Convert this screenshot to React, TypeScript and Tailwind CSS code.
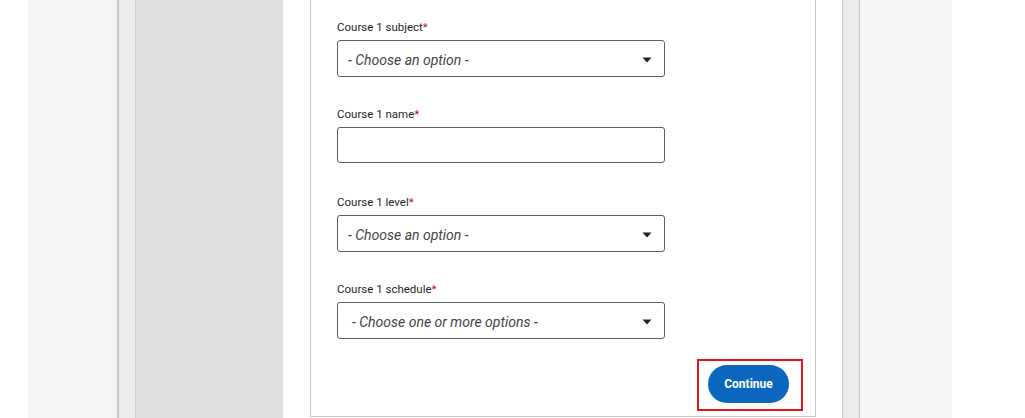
import React from "react";

const font = { fontFamily: "Roboto, 'Noto Sans', sans-serif" };

function Label({ text }: { text: string }) {
  return (
    <div className="h-[16px] text-[11.5px] leading-[16px] text-[#1f1f1f]">
      {text}
      <span className="text-[#d0021b]">*</span>
    </div>
  );
}

function Caret() {
  return (
    <svg width="10" height="6" viewBox="0 0 10 6" className="shrink-0">
      <path d="M0.5 0.5 L9.5 0.5 L5 5.5 Z" fill="#222" />
    </svg>
  );
}

function Select({ text, pl }: { text: string; pl: string }) {
  return (
    <div
      className={`mt-[5px] flex h-[37px] w-[328px] items-center justify-between rounded-[3px] border border-[#5f5f5f] bg-white pt-[3px] ${pl} pr-[12px]`}
    >
      <span className="text-[14px] italic text-[#444]">{text}</span>
      <Caret />
    </div>
  );
}

export default function App() {
  return (
    <div className="flex h-[418px] w-[1025px] overflow-hidden bg-white" style={font}>
      <div className="w-[28px] shrink-0 bg-white" />
      <div className="w-[89px] shrink-0 bg-[#f5f5f5]" />
      <div className="w-[2px] shrink-0 bg-[#c8c8c8]" />
      <div className="w-[16px] shrink-0 bg-[#ebebeb]" />
      <div className="w-[1px] shrink-0 bg-[#cccccc]" />
      <div className="w-[147px] shrink-0 bg-[#dfdfdf]" />
      <div className="w-[27px] shrink-0 bg-white" />
      <div className="relative h-[417px] w-[506px] shrink-0 border-x border-b border-[#c8c8c8] bg-white pl-[26px] pr-[26px]">
        <div className="pt-[19px]">
          <Label text="Course 1 subject" />
          <Select text="- Choose an option -" pl="pl-[10px]" />
        </div>
        <div className="pt-[29px]">
          <Label text="Course 1 name" />
          <div className="mt-[5px] h-[36px] w-[328px] rounded-[3px] border border-[#5f5f5f] bg-white" />
        </div>
        <div className="pt-[31px]">
          <Label text="Course 1 level" />
          <Select text="- Choose an option -" pl="pl-[10px]" />
        </div>
        <div className="pt-[29px]">
          <Label text="Course 1 schedule" />
          <Select text="- Choose one or more options -" pl="pl-[14px]" />
        </div>
        <div className="flex justify-end pt-[26px]">
          <div className="relative">
            <button className="flex h-[38px] w-[81px] items-center justify-center rounded-full bg-[#0b67bd] text-[12px] font-bold text-white">
              Continue
            </button>
            <div className="absolute left-[-11px] top-[-6px] h-[52px] w-[106px] border-2 border-[#e8141b]" />
          </div>
        </div>
      </div>
      <div className="w-[26px] shrink-0 bg-white" />
      <div className="w-[1px] shrink-0 bg-[#c8c8c8]" />
      <div className="w-[16px] shrink-0 bg-[#ebebeb]" />
      <div className="w-[1px] shrink-0 bg-[#c8c8c8]" />
      <div className="w-[92px] shrink-0 bg-[#f5f5f5]" />
      <div className="flex-1 bg-white" />
    </div>
  );
}
